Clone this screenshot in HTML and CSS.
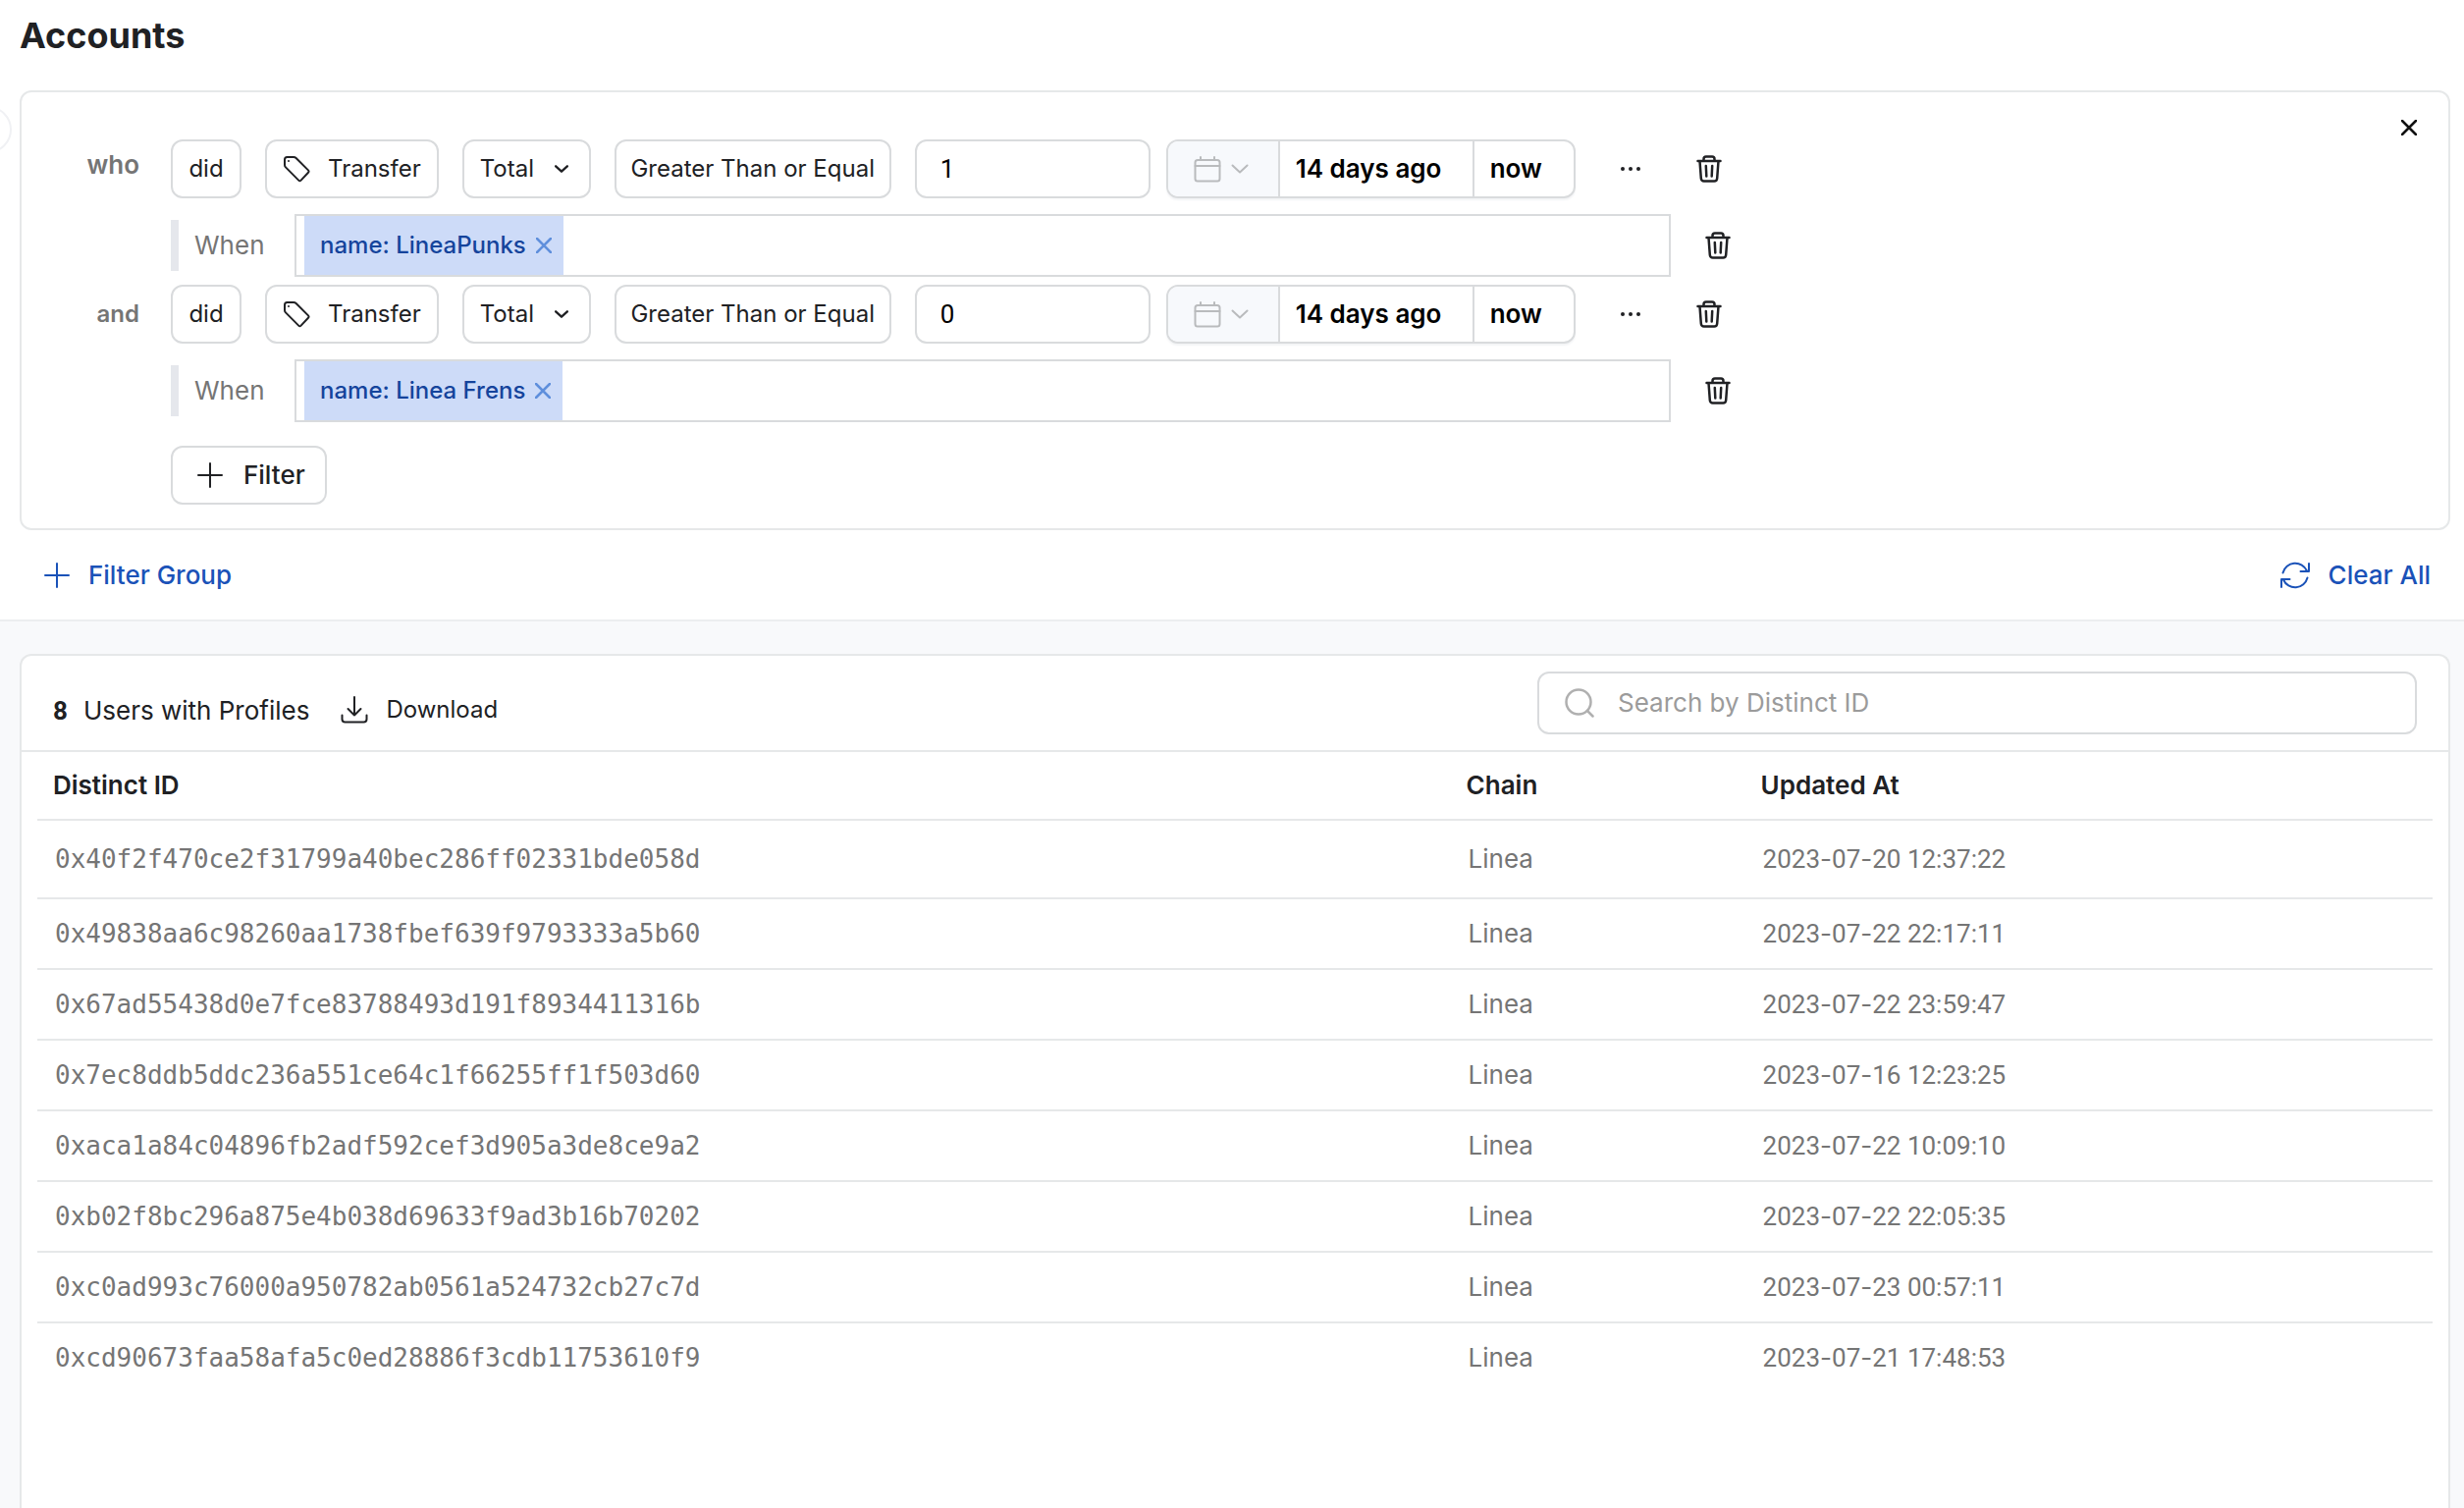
FILE: index.html
```html
<!DOCTYPE html>
<html lang="en">
<head>
<meta charset="utf-8">
<meta name="viewport" content="width=device-width, initial-scale=1">
<title>Accounts</title>
<link rel="stylesheet" href="styles.css">
</head>
<body>
<svg class="sprite" aria-hidden="true">
  <symbol id="tag" viewBox="0 0 28 28"><path d="M2 4.500Q2 2 4.500 2H11Q12.600 2 13.600 3L26 15.400Q27.200 16.600 26 17.800L18.600 25.600Q17.400 26.800 16.200 25.600L3 12.400Q2 11.400 2 10Z"/><circle cx="6" cy="6" r="1" fill="currentColor" stroke="none"/></symbol>
  <symbol id="trash" viewBox="0 0 28 28"><path d="M2.500 6H25.500M8.500 6V4Q8.500 1.500 11 1.500H17Q19.500 1.500 19.500 4V6M4.500 6L5.800 23.500Q6 26.500 8.800 26.500H19.200Q22 26.500 22.200 23.500L23.500 6M10.800 11L11.300 21.500M17.200 11L16.700 21.500"/></symbol>
  <symbol id="plus" viewBox="0 0 28 28"><path d="M14 2V26M2 14H26"/></symbol>
  <symbol id="cross" viewBox="0 0 16 16"><path d="M1 1L15 15M15 1L1 15"/></symbol>
  <symbol id="chevron" viewBox="0 0 18 10"><path d="M1.500 1.500L9 8.500L16.500 1.500"/></symbol>
  <symbol id="calendar" viewBox="0 0 28 28"><rect x="1.500" y="5" width="25" height="21.500" rx="2.500"/><path d="M1.500 11H26.500M7 2V5M21 2V5"/></symbol>
  <symbol id="dots" viewBox="0 0 24 6"><circle cx="4" cy="3" r="2"/><circle cx="12" cy="3" r="2"/><circle cx="20" cy="3" r="2"/></symbol>
  <symbol id="refresh" viewBox="0 0 32 32"><path d="M3.500 13.500A13 13 0 0 1 28 11.500M30 4V12H21.500M28.500 18.500A13 13 0 0 1 4 20.500M2 28V20H10.500"/></symbol>
  <symbol id="download" viewBox="0 0 28 28"><path d="M14 1V19.500M7.500 13L14 19.500L20.500 13M1.500 19.500V23.500Q1.500 26.500 4.500 26.500H23.500Q26.500 26.500 26.500 23.500V19.500"/></symbol>
  <symbol id="search" viewBox="0 0 30 30"><circle cx="14" cy="14" r="12.500"/><path d="M23 23L28.500 28.500"/></symbol>
</svg>

<main class="page">
  <button class="drawer-handle" type="button" aria-label="Toggle sidebar"></button>
  <section class="filters">
    <h1 class="title">Accounts</h1>
    <div class="card group">
      <button class="icon-btn close" type="button" aria-label="Close"><svg class="i16 bold"><use href="#cross"/></svg></button>

      <div class="clause">
        <span class="joiner lead">who</span>
        <div class="controls">
          <button class="box" type="button">did</button>
          <button class="box" type="button"><svg class="i28"><use href="#tag"/></svg>Transfer</button>
          <span class="select-wrap"><select class="box" aria-label="Measure"><option>Total</option></select><svg class="chev"><use href="#chevron"/></svg></span>
          <button class="box operator" type="button">Greater Than or Equal</button>
          <input class="box value" type="text" value="1" aria-label="Value">
          <div class="range">
            <button class="range-pick" type="button" aria-label="Pick dates"><svg class="i28"><use href="#calendar"/></svg><svg class="chev-lg"><use href="#chevron"/></svg></button>
            <button class="range-from" type="button">14 days ago</button>
            <button class="range-to" type="button">now</button>
          </div>
          <button class="icon-btn more" type="button" aria-label="More"><svg class="dots"><use href="#dots"/></svg></button>
          <button class="icon-btn" type="button" aria-label="Delete"><svg class="i28 mid"><use href="#trash"/></svg></button>
        </div>
      </div>
      <div class="when">
        <span class="when-label">When</span>
        <div class="tokens"><span class="token">name: LineaPunks<button class="icon-btn" type="button" aria-label="Remove"><svg class="i16 mid"><use href="#cross"/></svg></button></span></div>
        <button class="icon-btn" type="button" aria-label="Delete"><svg class="i28 mid"><use href="#trash"/></svg></button>
      </div>

      <div class="clause">
        <span class="joiner">and</span>
        <div class="controls">
          <button class="box" type="button">did</button>
          <button class="box" type="button"><svg class="i28"><use href="#tag"/></svg>Transfer</button>
          <span class="select-wrap"><select class="box" aria-label="Measure"><option>Total</option></select><svg class="chev"><use href="#chevron"/></svg></span>
          <button class="box operator" type="button">Greater Than or Equal</button>
          <input class="box value" type="text" value="0" aria-label="Value">
          <div class="range">
            <button class="range-pick" type="button" aria-label="Pick dates"><svg class="i28"><use href="#calendar"/></svg><svg class="chev-lg"><use href="#chevron"/></svg></button>
            <button class="range-from" type="button">14 days ago</button>
            <button class="range-to" type="button">now</button>
          </div>
          <button class="icon-btn more" type="button" aria-label="More"><svg class="dots"><use href="#dots"/></svg></button>
          <button class="icon-btn" type="button" aria-label="Delete"><svg class="i28 mid"><use href="#trash"/></svg></button>
        </div>
      </div>
      <div class="when">
        <span class="when-label">When</span>
        <div class="tokens"><span class="token">name: Linea Frens<button class="icon-btn" type="button" aria-label="Remove"><svg class="i16 mid"><use href="#cross"/></svg></button></span></div>
        <button class="icon-btn" type="button" aria-label="Delete"><svg class="i28 mid"><use href="#trash"/></svg></button>
      </div>

      <button class="box add" type="button"><svg class="i28"><use href="#plus"/></svg>Filter</button>
    </div>
    <div class="actions">
      <button class="link-btn" type="button"><svg class="i28"><use href="#plus"/></svg>Filter Group</button>
      <button class="link-btn" type="button"><svg class="i32"><use href="#refresh"/></svg>Clear All</button>
    </div>
  </section>

  <section class="results">
    <div class="card sheet">
      <div class="toolbar">
        <p class="count"><strong>8</strong>Users with Profiles</p>
        <button class="download" type="button"><svg class="i28"><use href="#download"/></svg>Download</button>
        <label class="search"><svg class="i30 mid"><use href="#search"/></svg><input type="search" placeholder="Search by Distinct ID" aria-label="Search by Distinct ID"></label>
      </div>
      <div class="table-wrap">
        <table>
          <colgroup><col class="col-id"><col class="col-chain"><col class="col-date"></colgroup>
          <thead><tr><th>Distinct ID</th><th>Chain</th><th>Updated At</th></tr></thead>
          <tbody>
            <tr><td>0x40f2f470ce2f31799a40bec286ff02331bde058d</td><td>Linea</td><td class="date">2023<span>-</span>07<span>-</span>20 12:37:22</td></tr>
            <tr><td>0x49838aa6c98260aa1738fbef639f9793333a5b60</td><td>Linea</td><td class="date">2023<span>-</span>07<span>-</span>22 22:17:11</td></tr>
            <tr><td>0x67ad55438d0e7fce83788493d191f8934411316b</td><td>Linea</td><td class="date">2023<span>-</span>07<span>-</span>22 23:59:47</td></tr>
            <tr><td>0x7ec8ddb5ddc236a551ce64c1f66255ff1f503d60</td><td>Linea</td><td class="date">2023<span>-</span>07<span>-</span>16 12:23:25</td></tr>
            <tr><td>0xaca1a84c04896fb2adf592cef3d905a3de8ce9a2</td><td>Linea</td><td class="date">2023<span>-</span>07<span>-</span>22 10:09:10</td></tr>
            <tr><td>0xb02f8bc296a875e4b038d69633f9ad3b16b70202</td><td>Linea</td><td class="date">2023<span>-</span>07<span>-</span>22 22:05:35</td></tr>
            <tr><td>0xc0ad993c76000a950782ab0561a524732cb27c7d</td><td>Linea</td><td class="date">2023<span>-</span>07<span>-</span>23 00:57:11</td></tr>
            <tr><td>0xcd90673faa58afa5c0ed28886f3cdb11753610f9</td><td>Linea</td><td class="date">2023<span>-</span>07<span>-</span>21 17:48:53</td></tr>
          </tbody>
        </table>
      </div>
    </div>
  </section>
</main>
</body>
</html>
```
FILE: styles.css
```css
* { box-sizing: border-box; }
body { margin: 0; background: #f8f9fb; color: #202124; font-family: Inter, "Liberation Sans", sans-serif; font-size: 26px; line-height: 32px; }
button, input, select { margin: 0; padding: 0; border: 0; background: none; color: inherit; font: inherit; white-space: nowrap; }
svg { flex: none; display: block; fill: none; stroke: currentColor; stroke-width: 2; stroke-linecap: round; stroke-linejoin: round; }
.sprite { position: absolute; width: 0; height: 0; }
.i16 { width: 16px; height: 16px; }
.i28 { width: 28px; height: 28px; }
.i30 { width: 30px; height: 30px; }
.i32 { width: 32px; height: 32px; }
.mid, .bold { stroke-width: 2.500; }
.dots { width: 24px; height: 6px; fill: currentColor; stroke: none; }

.page { position: relative; display: flex; flex-direction: column; min-height: 100vh; overflow: hidden; }
.drawer-handle { position: absolute; left: -36px; top: 108px; width: 48px; height: 48px; border: 2px solid #f0f1f4; border-radius: 50%; background: #fff; }
.filters { padding: 12px 14px 0 20px; background: #fff; border-bottom: 2px solid #eceef0; }
.title { margin: 0 0 32px; font-size: 36px; line-height: 48px; font-weight: 700; }
.card { border: 2px solid #e6e8e9; border-radius: 12px; background: #fff; }
.group { position: relative; padding: 48px 24px 24px 152px; }
.close { position: absolute; right: 32px; top: 28px; color: #111; }

.clause { display: flex; align-items: center; margin-left: -120px; gap: 32px; }
.joiner { width: 88px; text-align: right; font-size: 24px; font-weight: 600; color: #757575; }
.joiner.lead { padding-bottom: 8px; font-size: 26px; }
.controls { display: flex; align-items: center; gap: 24px; }
.box { display: flex; align-items: center; justify-content: center; gap: 18px; min-width: 72px; height: 60px; padding: 0 16px; border: 2px solid #d9dbdd; border-radius: 12px; background: #fff; font-size: 24px; }
.select-wrap { position: relative; }
.select-wrap .box { width: 131px; appearance: none; }
.chev { position: absolute; right: 23px; top: 26px; width: 14px; height: 8px; stroke-width: 3; pointer-events: none; }
.chev-lg { width: 18px; height: 10px; }
.operator { width: 282px; }
.value { width: 240px; padding: 0 24px; color: #000; font-family: Roboto, sans-serif; font-size: 26px; }
.range { display: flex; height: 60px; margin-left: -8px; border: 2px solid #d9dbdd; border-radius: 12px; background: #fff; overflow: hidden; color: #000; font-weight: 600; box-shadow: 0 2px 2px #f3f4f6; }
.range button { text-align: left; }
.range .range-pick { display: flex; align-items: center; gap: 10px; width: 112px; padding-left: 26px; background: #f7f9fc; color: #b9bbbd; }
.range-from { width: 198px; padding-left: 16px; border-left: 2px solid #d9dbdd; }
.range-to { width: 103px; padding-left: 16px; border-left: 2px solid #d9dbdd; }
.icon-btn { display: flex; align-items: center; justify-content: center; }
.more { margin: 0 30px 0 20px; }

.when { display: flex; align-items: center; margin: 16px 0 8px; color: #757575; }
.when-label { width: 126px; padding: 10px 0 10px 16px; border-left: 8px solid #e5e7ec; }
.tokens { flex: 0 1 1402px; display: flex; height: 64px; margin-right: 34px; padding-left: 8px; border: 2px solid #d9dbdd; background: #fff; }
.when > .icon-btn { color: #202124; }
.token { display: flex; align-items: center; gap: 10px; padding: 0 12px 0 16px; background: #cddbf8; color: #15449c; font-size: 24px; font-weight: 500; }
.token .icon-btn { color: #5f8fdc; }
.add { gap: 20px; margin-top: 24px; padding: 0 20px 0 24px; font-size: 26px; font-weight: 500; }

.actions { display: flex; align-items: center; justify-content: space-between; height: 91px; padding: 0 20px 0 24px; }
.link-btn { display: flex; align-items: center; gap: 18px; color: #1a52b8; font-weight: 500; }

.results { flex: 1; display: flex; padding: 33px 14px 0 20px; }
.sheet { flex: 1; border-bottom: 0; border-radius: 12px 12px 0 0; }
.toolbar { display: flex; align-items: center; height: 98px; padding: 0 32px; border-bottom: 2px solid #e6e8e9; }
.count { display: flex; gap: 16px; margin: 16px 0 0; }
.count strong { font-family: Roboto, sans-serif; }
.download { display: flex; align-items: center; gap: 18px; margin: 14px auto 0 32px; font-size: 24px; }
.search { flex: 0 1 896px; display: flex; align-items: center; gap: 24px; height: 64px; padding: 0 26px; border: 2px solid #d9dbdd; border-radius: 12px; color: #b0b0b0; }
.search input { flex: 1; min-width: 0; outline: 0; color: #202124; }
.search input::placeholder { color: #9b9b9b; opacity: 1; }

.table-wrap { padding: 0 16px; }
table { width: 100%; table-layout: fixed; border-collapse: separate; border-spacing: 0; }
.col-id { width: 59%; }
.col-chain { width: 300px; }
th, td { height: 72px; padding: 0 18px; border-bottom: 2px solid #e6e8e9; text-align: left; font-weight: 400; }
th { height: 70px; padding: 0 16px; font-weight: 600; }
td { color: #757575; }
td:first-child { font-family: "DejaVu Sans Mono", monospace; }
.date { font-family: Roboto, sans-serif; }
.date span { font-family: Inter, sans-serif; }
tbody tr:first-child td { height: 80px; }
tbody tr:last-child td { border-bottom-color: transparent; }
```
